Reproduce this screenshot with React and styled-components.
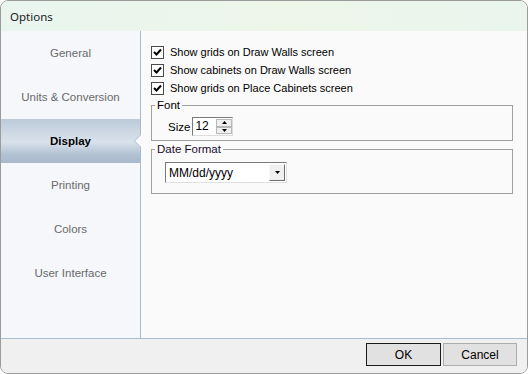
import styled, { createGlobalStyle } from 'styled-components';

const GlobalStyle = createGlobalStyle`
  html, body {
    margin: 0;
    padding: 0;
    background: #ffffff;
  }
  * {
    box-sizing: border-box;
  }
`;

const Window = styled.div`
  width: 528px;
  height: 374px;
  border: 1px solid #9c9c9c;
  border-radius: 8px;
  overflow: hidden;
  display: flex;
  flex-direction: column;
  background: #f0f0f0;
  font-family: 'Liberation Sans', Arial, sans-serif;
  font-size: 11px;
  color: #000;
`;

const TitleBar = styled.div`
  height: 30px;
  flex: none;
  display: flex;
  align-items: center;
  padding-left: 9px;
  background: linear-gradient(90deg, #e9f5ef 0%, #eef6ea 55%, #eaf5ee 100%);
  font-family: 'Noto Sans', 'Liberation Sans', sans-serif;
  font-size: 11.5px;
  color: #1a1a1a;
`;

const Body = styled.div`
  height: 308px;
  flex: none;
  display: flex;
  border-bottom: 1px solid #a9bdd2;
`;

const Sidebar = styled.div`
  width: 140px;
  flex: none;
  display: flex;
  flex-direction: column;
  background: #f5f7fb;
  border-right: 1px solid #a7bbd0;
`;

const Tab = styled.div`
  position: relative;
  height: 44px;
  display: flex;
  align-items: center;
  justify-content: center;
  font-size: 11.5px;
  color: ${(p) => (p.$active ? '#000' : '#6a6a6a')};
  font-weight: ${(p) => (p.$active ? 'bold' : 'normal')};
  background: ${(p) =>
    p.$active
      ? 'linear-gradient(180deg, #bccad9 0%, #d9e2eb 52%, #b3c2d3 80%, #a8b9cc 100%)'
      : 'transparent'};
`;

const Notch = styled.span`
  position: absolute;
  right: -1px;
  top: 50%;
  width: 0;
  height: 0;
  margin-top: -7px;
  border-top: 7px solid transparent;
  border-bottom: 7px solid transparent;
  border-right: 7px solid #a7bbd0;
  &::after {
    content: '';
    position: absolute;
    top: -6px;
    left: 1px;
    border-top: 6px solid transparent;
    border-bottom: 6px solid transparent;
    border-right: 6px solid #fafafa;
  }
`;

const Content = styled.div`
  flex: 1;
  background: #fafafa;
  padding: 12px 14px 0 10px;
  display: flex;
  flex-direction: column;
`;

const CheckRow = styled.label`
  height: 18px;
  display: flex;
  align-items: center;
  gap: 6px;
`;

const Box = styled.span`
  width: 13px;
  height: 13px;
  border: 1px solid #4a4a4a;
  background: #fff;
  display: flex;
  align-items: center;
  justify-content: center;
  flex: none;
`;

const Group = styled.fieldset`
  margin: 0;
  padding: 0 0 0 16px;
  border: 1px solid #a0a0a0;
  height: ${(p) => p.$h}px;
  margin-top: ${(p) => p.$mt}px;
  & > legend {
    padding: 0 2px;
    margin-left: -13px;
    font-size: 11.5px;
    line-height: 12px;
    color: ${(p) => p.$legendColor || '#000'};
  }
`;

const SizeRow = styled.div`
  display: flex;
  align-items: center;
  gap: 2px;
  margin-top: 6px;
  font-size: 11.5px;
`;

const Spinner = styled.div`
  width: 41px;
  height: 19px;
  display: flex;
  border: 1px solid;
  border-color: #7a7a7a #dcdcdc #dcdcdc #7a7a7a;
  background: #fff;
`;

const SpinValue = styled.span`
  flex: 1;
  padding-left: 2px;
  font-size: 12px;
  line-height: 17px;
`;

const SpinButtons = styled.div`
  width: 16px;
  display: flex;
  flex-direction: column;
  padding: 1px 0;
`;

const SpinBtn = styled.div`
  flex: 1;
  background: #f0f0f0;
  border: 1px solid #b8b8b8;
  display: flex;
  align-items: center;
  justify-content: center;
`;

const Select = styled.div`
  width: 122px;
  height: 21px;
  margin-top: 7px;
  margin-left: -3px;
  display: flex;
  align-items: center;
  border: 1px solid;
  border-color: #7a7a7a #e0e0e0 #e0e0e0 #7a7a7a;
  background: #fff;
  padding: 1px;
`;

const SelectText = styled.span`
  flex: 1;
  padding-left: 2px;
  font-size: 12px;
`;

const DropBtn = styled.div`
  width: 16px;
  height: 17px;
  background: #f0f0f0;
  border: 1px solid;
  border-color: #f8f8f8 #6e6e6e #6e6e6e #f8f8f8;
  display: flex;
  align-items: center;
  justify-content: center;
`;

const Footer = styled.div`
  flex: 1;
  display: flex;
  justify-content: flex-end;
  align-items: flex-start;
  gap: 2px;
  padding: 4px 10px 0 0;
  background: #f0f0f0;
`;

const Button = styled.button`
  width: ${(p) => p.$w}px;
  height: 23px;
  font-family: 'Liberation Sans', Arial, sans-serif;
  font-size: 12px;
  color: #000;
  background: #e1e1e1;
  border: 1px solid ${(p) => (p.$default ? '#1b1b1b' : '#adadad')};
  box-shadow: ${(p) => (p.$default ? 'inset 0 0 0 1px #e1e1e1' : 'none')};
  padding: 0;
`;

const Check = () => (
  <svg width="9" height="9" viewBox="0 0 9 9">
    <path d="M1 4 L3.5 6.5 L8 1.5" fill="none" stroke="#000" strokeWidth="2" />
  </svg>
);

const Arrow = ({ up }) => (
  <svg width="5" height="3" viewBox="0 0 5 3">
    <path d={up ? 'M2.5 0 L5 3 L0 3 Z' : 'M0 0 L5 0 L2.5 3 Z'} fill="#000" />
  </svg>
);

const tabs = [
  'General',
  'Units & Conversion',
  'Display',
  'Printing',
  'Colors',
  'User Interface',
];

const options = [
  'Show grids on Draw Walls screen',
  'Show cabinets on Draw Walls screen',
  'Show grids on Place Cabinets screen',
];

const App = () => {
  return (
    <>
      <GlobalStyle />
      <Window>
        <TitleBar>Options</TitleBar>
        <Body>
          <Sidebar>
            {tabs.map((t) => (
              <Tab key={t} $active={t === 'Display'}>
                {t}
                {t === 'Display' && <Notch />}
              </Tab>
            ))}
          </Sidebar>
          <Content>
            {options.map((o) => (
              <CheckRow key={o}>
                <Box>
                  <Check />
                </Box>
                {o}
              </CheckRow>
            ))}
            <Group $h={42} $mt={2}>
              <legend>Font</legend>
              <SizeRow>
                Size
                <Spinner>
                  <SpinValue>12</SpinValue>
                  <SpinButtons>
                    <SpinBtn>
                      <Arrow up />
                    </SpinBtn>
                    <SpinBtn>
                      <Arrow />
                    </SpinBtn>
                  </SpinButtons>
                </Spinner>
              </SizeRow>
            </Group>
            <Group $h={51} $mt={2} $legendColor="#1c0a2e">
              <legend>Date Format</legend>
              <Select>
                <SelectText>MM/dd/yyyy</SelectText>
                <DropBtn>
                  <Arrow />
                </DropBtn>
              </Select>
            </Group>
          </Content>
        </Body>
        <Footer>
          <Button $w={75} $default>
            OK
          </Button>
          <Button $w={74}>Cancel</Button>
        </Footer>
      </Window>
    </>
  );
};

export default App;
